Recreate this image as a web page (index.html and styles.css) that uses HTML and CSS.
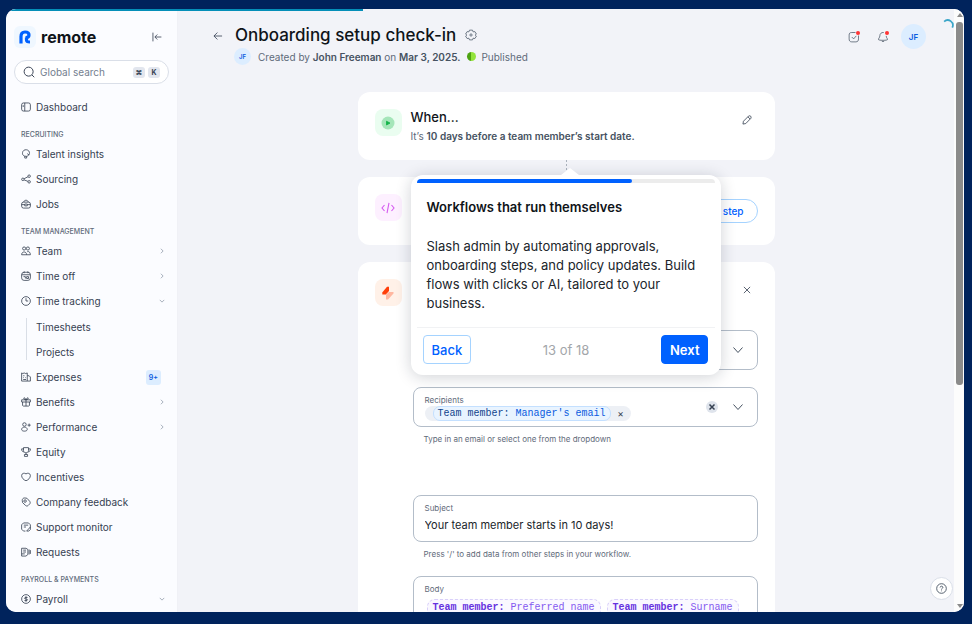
FILE: index.html
```html
<!DOCTYPE html>
<html lang="en">
<head>
  <meta charset="UTF-8" />
  <meta name="viewport" content="width=device-width, initial-scale=1.0" />
  <title>Onboarding setup check-in - Remote</title>
  <link rel="stylesheet" href="styles.css">
</head>
<body>
  <div class="window">
    <div class="load-bar"></div>

    <!-- Sidebar -->
    <aside class="sidebar">
      <div class="brand">
        <span class="brand-mark">
          <svg width="12" height="14" viewBox="0 0 12 14"><path d="M2 13.500V6.500C2 3.500 3.500 2 6 2s4 1 4 3-1.500 2.700-3.500 2.700" fill="none" stroke="#0061ff" stroke-width="3.200"/><path d="M7.500 7.500V10c0 1.500 1 2 3.500 2" fill="none" stroke="#0061ff" stroke-width="3.200"/></svg>
        </span>
        <span class="brand-name">remote</span>
        <button class="icon-btn collapse" aria-label="Collapse sidebar">
          <svg class="icon" viewBox="0 0 16 16"><path d="M1.500 1v14M15 8H5M8.500 4 4.500 8l4 4"/></svg>
        </button>
      </div>

      <label class="search">
        <svg class="icon search-icon" viewBox="0 0 16 16"><circle cx="7.500" cy="7.500" r="6"/><path d="m12 12 3 3"/></svg>
        <input type="text" placeholder="Global search" aria-label="Global search">
        <kbd>⌘</kbd>
        <kbd>K</kbd>
      </label>

      <nav>
        <a class="nav-item" href="#"><svg class="icon" viewBox="0 0 16 16"><rect x="1" y="1.500" width="14" height="13" rx="3"/><path d="M6 1.500v13M3.500 5v3"/></svg>Dashboard</a>

        <h2 class="nav-label">Recruiting</h2>
        <a class="nav-item" href="#"><svg class="icon" viewBox="0 0 16 16"><path d="M6 11.500C3 10.500 2 8.500 2.500 5.500 3 2.500 5.500 1 8.500 1.200c3.500.3 5.500 3 5 6-.4 2.300-2 4-4.500 4.500zM6 11.500v3h3v-2.800M10 7.500l3 2"/></svg>Talent insights</a>
        <a class="nav-item" href="#"><svg class="icon" viewBox="0 0 16 16"><circle cx="3" cy="8.500" r="2"/><circle cx="13" cy="3.500" r="2"/><circle cx="13" cy="12.500" r="2"/><path d="m5 7.500 6-3M5 9.500l6 2.200"/></svg>Sourcing</a>
        <a class="nav-item" href="#"><svg class="icon" viewBox="0 0 16 16"><rect x="1" y="5" width="14" height="9.500" rx="3"/><path d="M4.500 5c0-4 7-4 7 0M1 9h5m4 0h5M6 8h4v3H6z"/></svg>Jobs</a>

        <h2 class="nav-label">Team management</h2>
        <a class="nav-item" href="#"><svg class="icon" viewBox="0 0 16 16"><circle cx="5" cy="4" r="2.500"/><circle cx="11" cy="4" r="2.500"/><path d="M1 14c0-6 8-6 8 0zM10 9c3-.8 5 1.500 5 5H9"/></svg>Team<svg class="chevron" viewBox="0 0 8 8"><path d="m2.500 1 3 3-3 3"/></svg></a>
        <a class="nav-item" href="#"><svg class="icon" viewBox="0 0 16 16"><rect x="1" y="2" width="14" height="13" rx="4"/><path d="M1 6h14M5 .5v3M11 .5v3M4 9h3v3M9 9h3v3H9z"/></svg>Time off<svg class="chevron" viewBox="0 0 8 8"><path d="m2.500 1 3 3-3 3"/></svg></a>
        <a class="nav-item" href="#"><svg class="icon" viewBox="0 0 16 16"><circle cx="8" cy="8" r="7"/><path d="M8 3.500V8h3.500"/></svg>Time tracking<svg class="chevron" viewBox="0 0 8 8"><path d="m1 2.500 3 3 3-3"/></svg></a>
        <div class="subnav">
          <a class="nav-item" href="#">Timesheets</a>
          <a class="nav-item" href="#">Projects</a>
        </div>
        <a class="nav-item" href="#"><svg class="icon" viewBox="0 0 16 16"><path d="M1 14.500v-13l2 1 2-1 2.500 1 2.500-1v13zM10 6h3l2 2v6.500h-5M3.500 6h2M3.500 9h1M7 9h1M3.500 12H8"/></svg>Expenses<span class="count">9+</span></a>
        <a class="nav-item" href="#"><svg class="icon" viewBox="0 0 16 16"><path d="M1 4.500h14V8H1zM2.500 8v5.500l1 1h9l1-1V8M8 4.500v10M8 4.500C3 4 4 0 6 1.500zM8 4.500C13 4 12 0 10 1.500z"/></svg>Benefits<svg class="chevron" viewBox="0 0 8 8"><path d="m2.500 1 3 3-3 3"/></svg></a>
        <a class="nav-item" href="#"><svg class="icon" viewBox="0 0 16 16"><circle cx="5.500" cy="4" r="2.800"/><path d="M1 12c0-5 9-5 9 0 0 3.500-9 3.500-9 0zM13 2.500v5M10.500 5h5"/></svg>Performance<svg class="chevron" viewBox="0 0 8 8"><path d="m2.500 1 3 3-3 3"/></svg></a>
        <a class="nav-item" href="#"><svg class="icon" viewBox="0 0 16 16"><path d="M4 1h8v4.500c0 5-8 5-8 0zM4 3H1c0 3 1 4.500 3.500 5M12 3h3c0 3-1 4.500-3.500 5M8 9.500V12M5.500 12h5v3h-5z"/></svg>Equity</a>
        <a class="nav-item" href="#"><svg class="icon" viewBox="0 0 16 16"><path d="M8 14C4 12.500 1 9.500 1 5.500 1 2 5.500 1 8 3c2.500-2 7-1 7 2.500 0 4-3 7-7 8.500z"/></svg>Incentives</a>
        <a class="nav-item" href="#"><svg class="icon" viewBox="0 0 16 16"><path d="M2 5.500C2 3 3.500 1.500 6 1.500l3.500.5 4.500 5c1 1.500 1 3-.2 4.200l-2.300 2.300c-1.200 1.200-2.800 1.200-4 .2L2.500 9z"/><circle cx="6.500" cy="6.500" r="2"/></svg>Company feedback</a>
        <a class="nav-item" href="#"><svg class="icon" viewBox="0 0 16 16"><path d="M15 8V4.500L12 1.500H4L1 4.500v7l3 3h3M4.500 5h7M4.500 8H8M15 8l-6 6.500M9 14.500h3.500L15 12V8"/></svg>Support monitor</a>
        <a class="nav-item" href="#"><svg class="icon" viewBox="0 0 16 16"><path d="M1 2h7l3 2v8l-3 2.500H1zM3.500 5H8M3.500 8H8M13 4v8M15 5v6M1 11h5"/></svg>Requests</a>

        <h2 class="nav-label">Payroll &amp; payments</h2>
        <a class="nav-item" href="#"><svg class="icon" viewBox="0 0 16 16"><circle cx="8" cy="8" r="7"/><path d="M10.500 5.500h-4L5.500 7l5 2-1 1.500h-4M8 3.500v9"/></svg>Payroll<svg class="chevron" viewBox="0 0 8 8"><path d="m1 2.500 3 3 3-3"/></svg></a>
      </nav>
    </aside>

    <!-- Workflow editor -->
    <main class="content">
      <header class="page-head">
        <button class="icon-btn back" aria-label="Go back">
          <svg class="icon" viewBox="0 0 16 16"><path d="M14.500 8h-13M7 2.500 1.500 8 7 13.500"/></svg>
        </button>
        <div class="page-title">
          <div class="title-row">
            <h1>Onboarding setup check-in</h1>
            <button class="icon-btn" aria-label="Workflow settings">
              <svg class="tool" viewBox="0 0 16 16"><path d="M6 1.500h4l.8 2.300 2.400-.3 2 3.300L13.500 8l1.700 1.500-2 3.200-2.400-.4-.8 2.200H6l-.8-2.200-2.400.4-2-3.200L2.500 8 .8 6.800l2-3.300 2.400.3z"/><circle cx="8" cy="8" r="1.500"/></svg>
            </button>
          </div>
          <p class="meta">
            <span class="avatar small">JF</span>
            <span>Created by <b>John Freeman</b> on <b>Mar 3, 2025.</b></span>
            <span class="status"><i class="dot"></i>Published</span>
          </p>
        </div>
        <div class="head-tools">
          <button class="icon-btn notify" aria-label="Tasks">
            <svg class="tool" viewBox="0 0 16 16"><path d="M10 2H5C2.500 2 1.500 3 1.500 5.500v5C1.500 13 2.500 14.500 5 14.500h5.500c2.500 0 3.500-1.500 3.500-4V6M5 8l2.500 2.500L11 6.500"/></svg>
          </button>
          <button class="icon-btn notify" aria-label="Notifications">
            <svg class="tool" viewBox="0 0 16 16"><path d="M9 2C5.500 1.500 3.800 4 3.800 6.500 3.800 9 1.500 10 2 11.500c.5 1.200 11.500 1.200 12 0 .4-1.500-1.700-2-1.700-5M6 13c.7 1.500 3.300 1.500 4 0"/></svg>
          </button>
          <button class="avatar" aria-label="Account">JF</button>
        </div>
      </header>

      <div class="flow">
        <section class="card">
          <span class="tile green"><svg width="14" height="14" viewBox="0 0 14 14"><circle cx="7" cy="7" r="6.500" fill="#a5e6b9"/><path d="M5.500 5.200v3.800L9 7.100z" fill="#12b347" stroke="#12b347" stroke-width=".8" stroke-linejoin="round"/></svg></span>
          <div class="card-text">
            <h3>When...</h3>
            <p>It’s <b>10 days before a team member’s start date.</b></p>
          </div>
          <button class="icon-btn edit" aria-label="Edit trigger">
            <svg class="icon" viewBox="0 0 16 16"><path d="m1.500 14.500.8-4.500 8.200-8.300c2.500-1.700 5.200 1 3.700 3.600L6 13.700zM9.500 3l3.500 3.500"/></svg>
          </button>
        </section>

        <div class="connector"></div>

        <div class="step">
          <section class="card">
            <span class="tile pink"><svg width="14" height="12" viewBox="0 0 14 12"><path d="M3.500 3 1 6l2.500 3M10.500 3 13 6l-2.500 3M8 .8 6 11.200" fill="none" stroke="#d55af0" stroke-width="1.100"/></svg></span>
            <button class="add-step">Add step</button>
          </section>

          <!-- Product tour popover -->
          <div class="tour" role="dialog" aria-labelledby="tourTitle">
            <div class="tour-progress"><span style="width: 72.2%"></span></div>
            <h2 id="tourTitle">Workflows that run themselves</h2>
            <p>Slash admin by automating approvals, onboarding steps, and policy updates. Build flows with clicks or AI, tailored to your business.</p>
            <footer>
              <button class="tour-back">Back</button>
              <span>13 of 18</span>
              <button class="tour-next">Next</button>
            </footer>
          </div>
        </div>

        <div class="connector"></div>

        <section class="card form-card">
          <div class="form-head">
            <span class="tile orange"><svg width="14" height="14" viewBox="0 0 14 14"><path d="M6 .8 1.300 6.500v2h3.500L8 5V.8z" fill="#ff3f0a"/><path d="M5 8.500 8 6h4.500v1.500L7 13.500H5z" fill="#ffb7a0"/></svg></span>
            <button class="icon-btn edit" aria-label="Close step">
              <svg class="icon" viewBox="0 0 16 16"><path d="m3 3 10 10M13 3 3 13"/></svg>
            </button>
          </div>

          <div class="fields">
            <div class="box">
              <select aria-label="Action"><option></option></select>
              <svg class="caret" viewBox="0 0 12 12"><path d="m1.500 3.500 4.500 5 4.500-5"/></svg>
            </div>

            <div class="box recipients">
              <div class="box-main">
                <label for="recipients">Recipients</label>
                <div class="chips">
                  <span class="chip"><span class="chip-in"><b>Team member:</b> Manager's email</span><button aria-label="Remove">×</button></span>
                  <input id="recipients" type="text">
                </div>
              </div>
              <button class="clear" aria-label="Clear all"><svg viewBox="0 0 12 12"><path d="m3.500 3.500 5 5M8.500 3.500l-5 5"/></svg></button>
              <svg class="caret" viewBox="0 0 12 12"><path d="m1.500 3.500 4.500 5 4.500-5"/></svg>
            </div>
            <p class="hint">Type in an email or select one from the dropdown</p>

            <div class="box subject">
              <div class="box-main">
                <label for="subject">Subject</label>
                <input id="subject" type="text" value="Your team member starts in 10 days!">
              </div>
            </div>
            <p class="hint">Press '/' to add data from other steps in your workflow.</p>

            <div class="box body-box">
              <div class="box-main">
                <span id="bodyLabel" class="label">Body</span>
                <div class="editor" contenteditable="true" role="textbox" aria-labelledby="bodyLabel">
                  <span class="token"><b>Team member:</b> Preferred name</span>
                  <span class="token"><b>Team member:</b> Surname</span>
                </div>
              </div>
            </div>
          </div>
        </section>
      </div>

      <svg class="spinner" viewBox="0 0 14 14"><path d="M2.500 3A6 6 0 0 1 12 10" fill="none" stroke="#3ba6c9" stroke-width="2"/></svg>
      <button class="help" aria-label="Help">
        <svg viewBox="0 0 16 16"><circle cx="8" cy="8" r="7"/><path d="M6 6.500C6 4 10 4 10 6.500 10 8 8 7.500 8 9.500M8 11v1"/></svg>
      </button>
    </main>

    <div class="scrollbar">
      <i class="arrow up"></i>
      <span class="thumb"></span>
      <i class="arrow down"></i>
    </div>
  </div>
</body>
</html>
```
FILE: styles.css
```css
* {
  margin: 0;
  padding: 0;
  box-sizing: border-box;
}

body {
  height: 100vh;
  padding: 9px 8px 12px 6px;
  background: #00235c;
  font-family: Inter, "Liberation Sans", sans-serif;
  font-size: 10px;
  color: #364152;
  overflow: hidden;
}

button, input, select {
  font: inherit;
  color: inherit;
  border: none;
  background: none;
  outline: none;
}

button {
  cursor: pointer;
}

a {
  color: inherit;
  text-decoration: none;
}

svg {
  flex: none;
}

.window {
  position: relative;
  display: flex;
  height: 100%;
  border-radius: 10px;
  background: #f2f3f8;
  overflow: hidden;
}

.load-bar {
  position: absolute;
  top: 0;
  left: 0;
  z-index: 5;
  width: 37.3%;
  height: 2px;
  background: #058fb8;
}

.icon {
  width: 10px;
  height: 10px;
  fill: none;
  stroke: #364152;
  stroke-width: 1.3;
}

.icon-btn {
  display: flex;
}

/* Sidebar */
.sidebar {
  flex: none;
  width: 172px;
  padding: 17px 8px 0;
  border-right: 1px solid #f0f1f6;
  background: #fbfcff;
}

.brand {
  display: flex;
  align-items: center;
  height: 22px;
  gap: 5px;
}

.brand-mark {
  display: flex;
  align-items: center;
  justify-content: center;
  width: 22px;
  height: 22px;
  border-radius: 6px;
  background: #eff7ff;
}

.brand-name {
  font-size: 16px;
  font-weight: 700;
  color: #0f1419;
}

.collapse {
  margin-left: auto;
  margin-right: 7px;
}

.search {
  display: flex;
  align-items: center;
  gap: 3px;
  height: 24px;
  margin: 12px 0 11px;
  padding: 0 8px;
  border: 1px solid #dadfe8;
  border-radius: 12px;
  background: #fff;
}

.search-icon {
  width: 12px;
  height: 12px;
}

.search input {
  flex: 1;
  min-width: 0;
  padding-left: 2px;
}

.search input::placeholder {
  color: #74808f;
  opacity: 1;
}

kbd {
  width: 12px;
  height: 11px;
  border-radius: 3px;
  background: #e2e6ee;
  font: 700 7px/11px Inter, "DejaVu Sans", sans-serif;
  text-align: center;
}

.nav-item {
  display: flex;
  align-items: center;
  gap: 5px;
  height: 25px;
  padding: 0 4px 1px 7px;
  line-height: 14px;
}

.nav-label {
  height: 22px;
  padding: 7px 0 0 7px;
  font-size: 7px;
  line-height: 15px;
  font-weight: 500;
  text-transform: uppercase;
  color: #5f6b7a;
}

.chevron {
  width: 6px;
  height: 6px;
  margin-left: auto;
  fill: none;
  stroke: #8b97a6;
}

.subnav {
  margin: 1px 0 0 12px;
  background: linear-gradient(#d9dee6, #d9dee6) 0 3px / 1px 42px no-repeat;
}

.subnav .nav-item {
  padding-left: 10px;
}

.count {
  margin-left: auto;
  margin-right: 4px;
  padding: 0 3px;
  border-radius: 3px;
  background: #dcedff;
  color: #0a5be0;
  font-size: 7px;
  line-height: 15px;
  font-weight: 600;
}

/* Page header */
.content {
  position: relative;
  flex: 1;
  min-width: 0;
}

.page-head {
  display: flex;
  align-items: flex-start;
  height: 83px;
  padding: 13px 28px 0 35px;
}

.back {
  margin: 9px 12px 0 0;
}

.title-row {
  display: flex;
  align-items: center;
  gap: 9px;
  height: 26px;
}

h1 {
  font-size: 17px;
  line-height: 24px;
  font-weight: 500;
  color: #0f1419;
}

.tool {
  width: 12px;
  height: 12px;
  fill: none;
  stroke: #4a5565;
}

.meta {
  display: flex;
  align-items: center;
  gap: 7px;
  height: 17px;
  color: #5f6b7a;
}

.meta b {
  font-weight: 600;
  color: #465261;
}

.avatar {
  display: flex;
  align-items: center;
  justify-content: center;
  width: 25px;
  height: 25px;
  border-radius: 50%;
  background: #dcedff;
  color: #0a5be0;
  font-size: 8px;
  font-weight: 600;
}

.small {
  width: 17px;
  height: 17px;
  margin-left: -1px;
  font-size: 6px;
}

.status {
  display: flex;
  align-items: center;
  gap: 5px;
}

.dot {
  width: 9px;
  height: 9px;
  border-radius: 50%;
  background: linear-gradient(90deg, #4ea312 50%, #93e33c 50%);
}

.head-tools {
  display: flex;
  align-items: center;
  gap: 17px;
  height: 29px;
  margin-left: auto;
}

.head-tools .avatar {
  margin-left: -5px;
}

.notify {
  position: relative;
}

.notify::after {
  content: "";
  position: absolute;
  top: 0;
  right: 0;
  width: 4px;
  height: 4px;
  border-radius: 50%;
  background: #ff3434;
}

/* Steps */
.flow {
  max-width: 417px;
  margin: 0 auto;
}

.card {
  display: flex;
  align-items: flex-start;
  height: 68px;
  padding: 17px;
  border-radius: 12px;
  background: #fff;
}

.connector {
  width: 1px;
  height: 17px;
  margin: 0 auto;
  background: repeating-linear-gradient(#aab2bd 0 2px, transparent 2px 4px);
}

.tile {
  display: flex;
  flex: none;
  align-items: center;
  justify-content: center;
  width: 27px;
  height: 27px;
  margin-right: 9px;
  border-radius: 8px;
}

.green { background: #eafdf0; }
.pink { background: #fdf0ff; }
.orange { background: #fff1e8; }

h3 {
  font-size: 13px;
  line-height: 17px;
  font-weight: 500;
  color: #0f1419;
}

.card-text p {
  line-height: 20px;
  color: #5f6b7a;
}

.card-text b {
  font-weight: 600;
  color: #465261;
}

.edit {
  margin: 6px 6px 0 auto;
}

.step {
  position: relative;
}

.add-step {
  height: 24px;
  margin: 5px 0 0 auto;
  padding: 0 13px;
  border: 1px solid #a5d3ff;
  border-radius: 12px;
  font-weight: 500;
  color: #0061ff;
}

/* Tour popover */
.tour {
  position: absolute;
  top: -2px;
  left: 53px;
  z-index: 3;
  width: 310px;
  min-height: 200px;
  padding: 4px 6px;
  border-radius: 12px;
  background: #fff;
  box-shadow: 0 2px 16px rgba(20, 30, 50, 0.2);
}

.tour::before {
  content: "";
  position: absolute;
  top: -7px;
  left: 150px;
  border: 9px solid transparent;
  border-top: none;
  border-bottom: 7px solid #fff;
}

.tour-progress {
  height: 4px;
  border-radius: 4px 4px 0 0;
  background: #ececec;
  overflow: hidden;
}

.tour-progress span {
  display: block;
  height: 4px;
  border-radius: 0 2px 2px 0;
  background: #0061ff;
}

.tour h2 {
  padding: 15px 10px 0;
  font-size: 13px;
  line-height: 19px;
  font-weight: 600;
  color: #0f1419;
}

.tour p {
  padding: 20px 10px 14px;
  font-size: 13px;
  line-height: 19px;
  color: #20252b;
}

.tour footer {
  display: flex;
  align-items: center;
  justify-content: space-between;
  padding: 7px 6px 0;
  border-top: 1px solid #f1f2f4;
  font-size: 13px;
  color: #a3a6aa;
}

.tour-back, .tour-next {
  height: 29px;
  padding: 0 8px;
  border: 1px solid #a5d3ff;
  border-radius: 4px;
  font-weight: 500;
  color: #0061ff;
}

.tour-next {
  border-color: #0061ff;
  background: #0061ff;
  color: #fff;
  font-weight: 600;
}

/* Email form */
.form-card {
  display: block;
  height: 600px;
}

.form-head {
  display: flex;
  align-items: flex-start;
  height: 51px;
}

.fields {
  margin-left: 38px;
}

.box {
  display: flex;
  align-items: center;
  height: 40px;
  padding: 0 11px;
  border: 1px solid #b3bdc9;
  border-radius: 8px;
}

.box select {
  flex: 1;
  appearance: none;
}

.box-main {
  flex: 1;
}

.box label, .label {
  display: block;
  font-size: 8px;
  line-height: 12px;
  color: #5f6b7a;
}

.caret {
  width: 12px;
  height: 12px;
  margin-right: 2px;
  fill: none;
  stroke: #465261;
}

.recipients {
  margin-top: 17px;
}

.chips {
  display: flex;
  height: 15px;
}

.chips input {
  flex: 1;
  min-width: 0;
}

.chip {
  display: flex;
  align-items: center;
  padding-left: 8px;
  border-radius: 8px;
  background: #edf0f5;
  font: 10px/13px "Liberation Mono", monospace;
  color: #0a5be0;
}

.chip-in {
  padding: 0 4px;
  border: 1px solid #c4e0ff;
  border-radius: 7px;
  background: #e9f4ff;
}

.chip b {
  font-weight: 400;
  color: #12448c;
}

.chip button {
  width: 20px;
  font-family: Inter, sans-serif;
  color: #364152;
}

.clear {
  display: flex;
  width: 12px;
  height: 12px;
  margin-right: 14px;
  border-radius: 50%;
  background: #dfe4ec;
}

.clear svg {
  width: 12px;
  height: 12px;
  stroke: #364152;
  stroke-width: 1.5;
}

.hint {
  padding: 5px 11px 0;
  font-size: 8px;
  line-height: 14px;
  color: #5f6b7a;
}

.subject {
  height: 47px;
  margin-top: 49px;
}

.subject input {
  width: 100%;
  height: 22px;
  font-size: 11px;
  color: #20252b;
}

.body-box {
  align-items: flex-start;
  height: 160px;
  margin-top: 15px;
  padding-top: 6px;
}

.editor {
  display: flex;
  gap: 6px;
  padding: 4px 2px;
  white-space: nowrap;
  outline: none;
}

.token {
  padding: 0 5px;
  border: 1px dashed #d9d0fa;
  border-radius: 8px;
  background: #faf8ff;
  font: 10px/16px "Liberation Mono", monospace;
  color: #8458f0;
}

.token b {
  color: #6633e0;
}

/* Floating items */
.spinner {
  position: absolute;
  top: 10px;
  right: 0;
  width: 12px;
  height: 12px;
}

.help {
  position: absolute;
  right: 1px;
  bottom: 12px;
  display: flex;
  align-items: center;
  justify-content: center;
  width: 23px;
  height: 23px;
  border: 1px solid #dadfe8;
  border-radius: 50%;
  background: #fff;
}

.help svg {
  width: 11px;
  height: 11px;
  fill: none;
  stroke: #465261;
  stroke-width: 1.3;
}

.scrollbar {
  display: flex;
  flex: none;
  flex-direction: column;
  align-items: center;
  width: 10px;
  padding: 4px 0 4px 1px;
  background: #fcfcfc;
}

.thumb {
  width: 7px;
  height: 61%;
  margin-top: 5px;
  border-radius: 3px;
  background: #8b8b8b;
}

.arrow {
  border: 3px solid transparent;
}

.up {
  border-top: none;
  border-bottom: 4px solid #8b8b8b;
}

.down {
  margin-top: auto;
  border-bottom: none;
  border-top: 4px solid #8b8b8b;
}
```
